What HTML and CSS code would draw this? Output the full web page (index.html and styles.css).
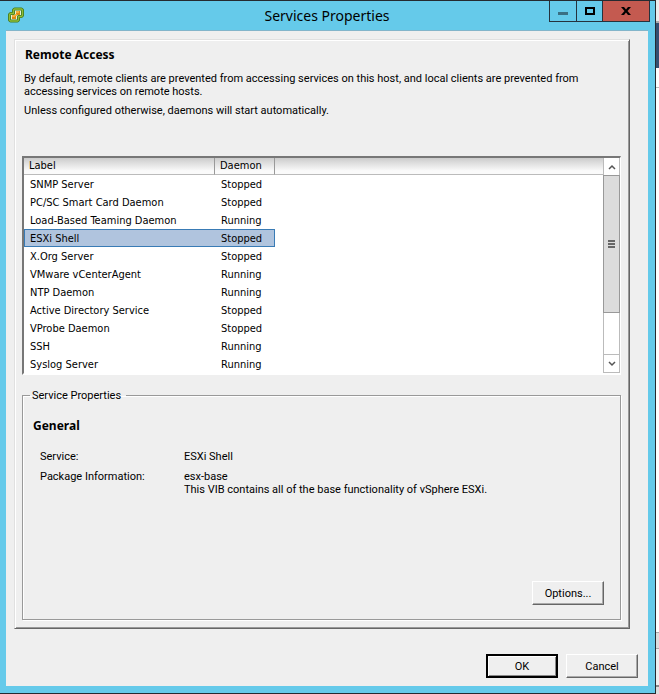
FILE: index.html
```html
<!DOCTYPE html>
<html lang="en">
<head>
<meta charset="utf-8">
<title>Services Properties</title>
<link rel="stylesheet" href="styles.css">
</head>
<body>
<div class="desktop">
  <main class="window">
    <header class="titlebar">
      <svg class="app-icon" viewBox="0 0 18 18" aria-hidden="true">
        <path d="M7.500 3h7l1 1v5.500l-1 1h-3v3.500l-1 1h-7l-1-1V8.500l1-1h3V4z" fill="#e3f1dc" stroke="#437b20" stroke-width="3" stroke-linejoin="round"/>
        <path d="M7.500 3h7l1 1v5.500l-1 1h-3v3.500l-1 1h-7l-1-1V8.500l1-1h3V4z" fill="none" stroke="#8fbd35" stroke-width="1.300" stroke-linejoin="round"/>
        <path d="M9 5h4v4H9zM5 9h4v4H5z" fill="#e08a12"/>
        <path d="M9 5h3v2H9zM5 9h3v2H5zM8 8h2v2H8z" fill="#f5b13c"/>
      </svg>
      <h1 class="title">Services Properties</h1>
      <div class="caption-buttons">
        <button class="caption minimize" aria-label="Minimize"><svg viewBox="0 0 10 10" aria-hidden="true"><path d="M0 6h10v3H0z" fill="#3a6f83"/></svg></button>
        <button class="caption maximize" aria-label="Maximize"><svg viewBox="0 0 10 10" aria-hidden="true"><path d="M0 1h10v8H0zM2 3v4h6V3z" fill="#000" fill-rule="evenodd"/></svg></button>
        <button class="caption close" aria-label="Close"><svg viewBox="0 0 10 10" aria-hidden="true"><path d="M0 1h3l2 2.500L7 1h3L6.500 5 10 9H7L5 6.500 3 9H0l3.500-4z" fill="#000"/></svg></button>
      </div>
    </header>
    <div class="client">
      <section class="panel">
        <h2 class="heading">Remote Access</h2>
        <p class="text">By default, remote clients are prevented from accessing services on this host, and local clients are prevented from accessing services on remote hosts.</p>
        <p class="text">Unless configured otherwise, daemons will start automatically.</p>
        <div class="listbox">
          <div class="list-body">
            <table class="services">
              <thead><tr><th class="col-label" scope="col">Label</th><th class="col-daemon" scope="col">Daemon</th><th class="col-rest"></th></tr></thead>
              <tbody>
                <tr><td>SNMP Server</td><td>Stopped</td><td></td></tr>
                <tr><td>PC/SC Smart Card Daemon</td><td>Stopped</td><td></td></tr>
                <tr><td>Load-Based Teaming Daemon</td><td>Running</td><td></td></tr>
                <tr class="selected"><td>ESXi Shell</td><td>Stopped</td><td></td></tr>
                <tr><td>X.Org Server</td><td>Stopped</td><td></td></tr>
                <tr><td>VMware vCenterAgent</td><td>Running</td><td></td></tr>
                <tr><td>NTP Daemon</td><td>Running</td><td></td></tr>
                <tr><td>Active Directory Service</td><td>Stopped</td><td></td></tr>
                <tr><td>VProbe Daemon</td><td>Stopped</td><td></td></tr>
                <tr><td>SSH</td><td>Running</td><td></td></tr>
                <tr><td>Syslog Server</td><td>Running</td><td></td></tr>
              </tbody>
            </table>
          </div>
          <div class="scrollbar">
            <button class="arrow" aria-label="Scroll up"><svg viewBox="0 0 8 6" aria-hidden="true"><path d="M1 5l3-3 3 3" fill="none" stroke="#555" stroke-width="1.500"/></svg></button>
            <div class="thumb"><svg class="grip" viewBox="0 0 7 8" aria-hidden="true"><path d="M0 0h7v2H0zM0 3h7v2H0zM0 6h7v2H0z" fill="#666"/></svg></div>
            <div class="track"></div>
            <button class="arrow" aria-label="Scroll down"><svg viewBox="0 0 8 6" aria-hidden="true"><path d="M1 1l3 3 3-3" fill="none" stroke="#555" stroke-width="1.500"/></svg></button>
          </div>
        </div>
        <fieldset class="group">
          <legend>Service Properties</legend>
          <h3 class="heading">General</h3>
          <dl class="details">
            <dt>Service:</dt><dd>ESXi Shell</dd>
            <dt>Package Information:</dt><dd><p>esx-base</p><p>This VIB contains all of the base functionality of vSphere ESXi.</p></dd>
          </dl>
          <div class="group-actions"><button class="button">Options...</button></div>
        </fieldset>
      </section>
      <footer class="actions">
        <button class="button default">OK</button>
        <button class="button">Cancel</button>
      </footer>
    </div>
  </main>
  <div class="behind"><div class="behind-top"></div><div class="behind-bar"></div><div class="behind-row"></div><div class="behind-page"></div><div class="behind-tool"></div><div class="behind-status"></div><div class="behind-end"></div></div>
</div>
</body>
</html>
```
FILE: styles.css
```css
* { box-sizing: border-box; }
body {
  margin: 0;
  font: 11px/13px Roboto, "Liberation Sans", sans-serif;
  color: #000;
}
h1, h2, h3, p, dl, dd { margin: 0; }
button { font: inherit; color: inherit; padding: 0; border-radius: 0; }
.desktop { display: flex; min-height: 100vh; }
.window {
  flex: 1;
  display: flex;
  flex-direction: column;
  background: #65caea;
  border: 1px solid #252a30;
  border-left: 0;
  padding: 0 7px 7px 6px;
}
.titlebar { display: grid; grid-template-columns: 1fr auto 1fr; height: 30px; border-bottom: 1px solid #83b5ca; }
.app-icon { width: 18px; height: 18px; margin: 5px 0 0 1px; }
.title { font: 14px/30px "Noto Sans", sans-serif; }
.caption-buttons { display: flex; justify-content: flex-end; align-items: flex-start; margin-right: -2px; }
.caption { height: 21px; width: 28px; border: 1px solid #25323d; border-top: 0; background: #65caea; display: flex; align-items: center; justify-content: center; }
.caption + .caption { border-left: 0; }
.caption svg { width: 10px; height: 10px; }
.maximize { width: 26px; }
.close { width: 47px; background: #c45a50; }
.client { flex: 1; display: flex; flex-direction: column; background: #efefef; padding: 8px 18px 8px 8px; }
.panel {
  flex: 1;
  display: flex;
  flex-direction: column;
  border: 1px solid;
  border-color: #e0e0e0 #666 #666 #e0e0e0;
  box-shadow: inset 1px 1px #fff, inset -1px -1px #999;
  padding: 7px 8px 8px 7px;
}
.heading { font: bold 12px/15px "Noto Sans", sans-serif; margin-left: 3px; }
.text { margin: 10px 3px 0 2px; }
.text + .text { margin-top: 6px; }
.listbox { display: flex; background: #fff; border: 2px solid; border-color: #777 #fff #fff #777; border-right-width: 1px; margin-top: 39px; height: 219px; font-family: "DejaVu Sans Condensed", "Noto Sans", sans-serif; }
.list-body { flex: 1; overflow: hidden; }
.services { width: 100%; table-layout: fixed; border-collapse: separate; border-spacing: 0; text-align: left; }
.services th { height: 17px; padding: 0 5px 2px; font-weight: normal; background: linear-gradient(#ccc, #fafafa 80%); border-right: 1px solid #999; border-bottom: 1px solid #bbb; }
.services .col-label { width: 191px; }
.services .col-daemon { width: 60px; }
.services .col-rest { border-right: 0; }
.services td { height: 18px; padding: 0 6px; }
.selected td:nth-child(-n+2) { background: #b0c4de; border: 1px solid #397bb5; padding-left: 5px; }
.selected td:first-child { border-right: 0; }
.services .selected td:nth-child(2) { border-left: 0; padding-left: 6px; }
.scrollbar { width: 17px; display: flex; flex-direction: column; border: 1px solid #bbb; border-top: 0; }
.arrow { height: 17px; border: 0; background: #fff; display: flex; align-items: center; justify-content: center; }
.arrow svg { width: 8px; height: 6px; }
.thumb { flex: 140; margin: 0 -1px; background: #dcdcdc; border: 1px solid #999; display: flex; align-items: center; justify-content: center; }
.grip { width: 7px; height: 8px; }
.track { flex: 42; border-bottom: 1px solid #bbb; }
.group { flex: 1; display: flex; flex-direction: column; border: 1px solid #999; box-shadow: 1px 1px #fff, inset 1px 1px #fff; margin: 14px 0 0; padding: 16px 16px 14px 7px; min-width: 0; }
.group legend { padding: 0 5px 0 2px; }
.details { display: grid; grid-template-columns: 144px 1fr; gap: 7px 0; margin: 17px 0 0 10px; }
.group-actions { margin-top: auto; display: flex; justify-content: flex-end; }
.button { width: 72px; height: 24px; background: #efefef; border: 1px solid; border-color: #fff #666 #666 #fff; box-shadow: inset -1px -1px #aaa; }
.default { border: 2px solid #000; box-shadow: inset 1px 1px #fff, inset -1px -1px #888; }
.actions { display: flex; justify-content: flex-end; gap: 8px; margin: 25px -8px 0 0; }
.behind { width: 3px; display: flex; flex-direction: column; background: #fff; }
.behind-top { height: 23px; background: #ececec; border-bottom: 2px solid #aaa; }
.behind-bar { height: 45px; background: #344f70; }
.behind-row { height: 20px; border-bottom: 1px solid #bbb; }
.behind-page { flex: 1; }
.behind-tool { height: 17px; background: #ddd; border: solid #aaa; border-width: 1px 0; }
.behind-status { height: 36px; background: #efefef; }
.behind-end { height: 9px; background: #ddd; border-top: 2px solid #888; }
```
